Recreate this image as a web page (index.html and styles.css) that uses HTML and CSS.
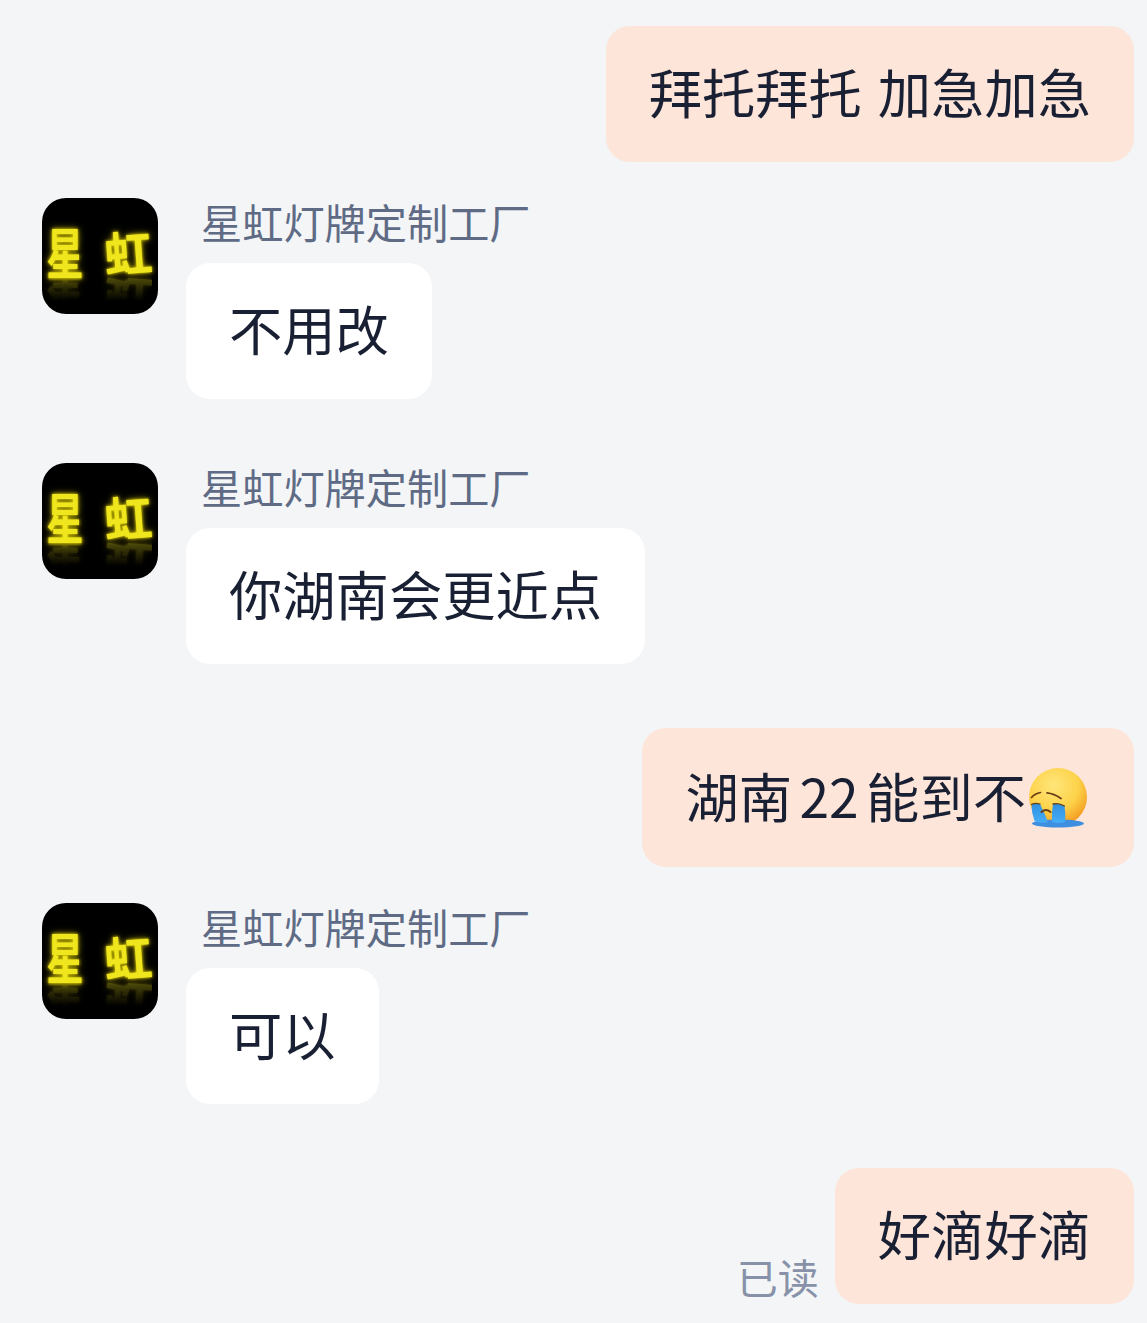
FILE: index.html
```html
<!DOCTYPE html>
<html lang="zh-CN">
<head>
  <meta charset="utf-8">
  <title>聊天</title>
  <link rel="stylesheet" href="styles.css">
</head>
<body>
  <div class="chat">
    <div class="msg msg-out">
      <div class="bubble bubble-out">拜托拜托 加急加急</div>
    </div>

    <div class="msg msg-in gap-small">
      <div class="avatar"><div class="avatar-logo"><span class="logo-star">星</span><span class="logo-rainbow">虹</span></div></div>
      <div class="msg-body">
        <div class="sender">星虹灯牌定制工厂</div>
        <div class="bubble bubble-in">不用改</div>
      </div>
    </div>

    <div class="msg msg-in">
      <div class="avatar"><div class="avatar-logo"><span class="logo-star">星</span><span class="logo-rainbow">虹</span></div></div>
      <div class="msg-body">
        <div class="sender">星虹灯牌定制工厂</div>
        <div class="bubble bubble-in">你湖南会更近点</div>
      </div>
    </div>

    <div class="msg msg-out">
      <div class="bubble bubble-out bubble-emoji"><span class="tight-words">湖南 22 能到不</span><svg class="emoji" viewBox="0 0 64 64" aria-hidden="true">
          <defs>
            <radialGradient id="face" cx="42%" cy="30%" r="72%">
              <stop offset="0" stop-color="#fee67a"/>
              <stop offset="0.6" stop-color="#fdd24a"/>
              <stop offset="1" stop-color="#f39a1e"/>
            </radialGradient>
            <linearGradient id="tear" x1="0" y1="0" x2="0" y2="1">
              <stop offset="0" stop-color="#2f8fe0"/>
              <stop offset="1" stop-color="#45aef7"/>
            </linearGradient>
          </defs>
          <circle cx="32" cy="31" r="29" fill="url(#face)"/>
          <ellipse cx="32" cy="57.5" rx="26" ry="4" fill="#3f8fe0"/>
          <!-- tears run from under each eye down into the puddle -->
          <path d="M5.5 38.5 Q9 36.5 14 38 Q18 46 22 56 Q14 58 8.5 55 Q5.5 47 5.5 38.5Z" fill="url(#tear)"/>
          <path d="M27 38 Q33 36.5 38.5 40 Q40 48 39 56 Q32 58 26 56 Q25.5 46 27 38Z" fill="url(#tear)"/>
          <path d="M5.5 38.5 Q9 36.5 14 38M27 38 Q33 36.5 38.5 40" fill="none" stroke="#6b3f14" stroke-width="1.3" stroke-linecap="round"/>
          <path d="M5.5 31.5 Q9 27.5 14.5 26.5M21 26.8 Q28 27.5 35 32.5" fill="none" stroke="#6b3f14" stroke-width="1.7" stroke-linecap="round"/>
          <path d="M15.5 46 Q20 42 24.5 46" fill="none" stroke="#6b3f14" stroke-width="1.9" stroke-linecap="round"/>
        </svg></div>
    </div>

    <div class="msg msg-in gap-small">
      <div class="avatar"><div class="avatar-logo"><span class="logo-star">星</span><span class="logo-rainbow">虹</span></div></div>
      <div class="msg-body">
        <div class="sender">星虹灯牌定制工厂</div>
        <div class="bubble bubble-in">可以</div>
      </div>
    </div>

    <div class="msg msg-out">
      <span class="read-mark">已读</span>
      <div class="bubble bubble-out">好滴好滴</div>
    </div>
  </div>
</body>
</html>
```

FILE: styles.css
```css
:root {
  --bg-color: #f3f5f7;
  --bubble-out: #fde5d9;
  --bubble-in: #fff;
  --text-color: #1a2033;
  --text-light: #5f6b85;
  --text-muted: #8791a8;
  --radius: 24px;
}

* {
  margin: 0;
  padding: 0;
  box-sizing: border-box;
}

body {
  font-family: "Noto Sans CJK SC", "Noto Sans", sans-serif;
  color: var(--text-color);
  background-color: var(--bg-color);
}

.chat {
  display: flex;
  flex-direction: column;
  padding: 26px 13px 19px 42px;
}

.msg {
  display: flex;
  margin-top: 64px;
}

.msg:first-child {
  margin-top: 0;
}

.msg.gap-small {
  margin-top: 36px;
}

.msg-in {
  align-items: flex-start;
  gap: 28px;
}

.msg-out {
  justify-content: flex-end;
  align-items: flex-end;
  gap: 16px;
}

.msg-body {
  display: flex;
  flex-direction: column;
  align-items: flex-start;
}

.sender {
  height: 65px;
  padding-left: 15px;
  font-size: 41.2px;
  line-height: 46px;
  color: var(--text-light);
}

.bubble {
  padding: 29px 43px 35px;
  border-radius: var(--radius);
  font-size: 53.3px;
  line-height: 72px;
  word-spacing: 4px;
  white-space: nowrap;
}

.bubble-out {
  background-color: var(--bubble-out);
}

.bubble-in {
  background-color: var(--bubble-in);
}

.bubble-emoji {
  display: flex;
  align-items: center;
  height: 139px;
  padding: 0 44px 0 43px;
}

.tight-words {
  margin-bottom: 5px;
  word-spacing: -4.5px;
}

.emoji {
  width: 64px;
  height: 64px;
  flex-shrink: 0;
}

.read-mark {
  margin-bottom: 3px;
  font-size: 41px;
  line-height: 50px;
  color: var(--text-muted);
}

.avatar {
  display: flex;
  justify-content: center;
  flex-shrink: 0;
  width: 116px;
  height: 116px;
  padding-top: 24px;
  padding-right: 4px;
  border-radius: 24px;
  background-color: #000;
  overflow: hidden;
}

.avatar-logo {
  display: flex;
  align-items: center;
  gap: 18px;
  height: 58px;
  font-weight: 700;
  color: #efe61e;
  text-shadow: 0 0 3px #f5e600, 0 0 7px #a89a00;
  -webkit-box-reflect: below -8px linear-gradient(transparent 50%, rgba(0, 0, 0, 0.4));
}

.logo-star {
  font-size: 42px;
  line-height: 58px;
  transform: scale(0.88, 1.3);
}

.logo-rainbow {
  font-size: 48px;
  line-height: 58px;
  transform: rotate(-4deg);
}
```
